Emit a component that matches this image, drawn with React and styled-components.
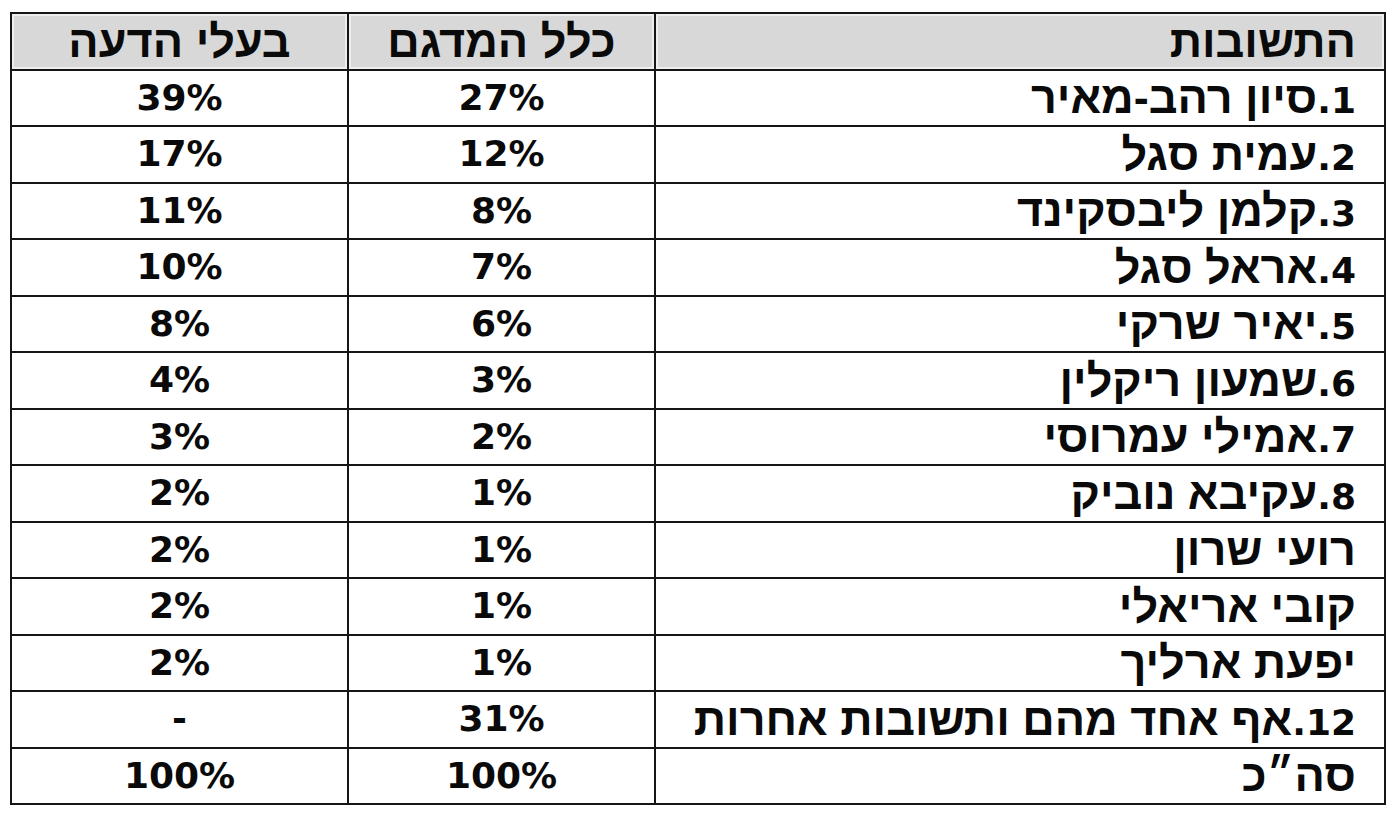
import React from "react";
import styled, { createGlobalStyle } from "styled-components";

const Global = createGlobalStyle`
  html, body { margin: 0; padding: 0; background: #ffffff; }
  body { font-family: "Liberation Sans", "DejaVu Sans", sans-serif; }
`;

const Page = styled.div`
  width: 1400px;
  height: 821px;
  box-sizing: border-box;
  padding: 12px 16px 0 10px;
  background: #fff;
`;

const Table = styled.table`
  direction: rtl;
  width: 1374px;
  border-collapse: collapse;
  table-layout: fixed;
  font-weight: 700;
  color: #0a0a0a;
`;

const Row = styled.tr`
  height: 56.5px;
`;

const Cell = styled.td`
  border: 2px solid #151515;
  padding: 0 ${(p) => (p.$answer ? "28px" : "0")} 0 0;
  text-align: ${(p) => (p.$answer ? "right" : "center")};
  vertical-align: middle;
  line-height: 1;
  white-space: nowrap;
  background: ${(p) => (p.$head ? "#d8d8d8" : "#ffffff")};
  box-shadow: ${(p) => (p.$head ? "inset 0 0 0 2px #eeeeee" : "none")};
`;

const Heb = styled.span`
  font-family: "Liberation Sans", "DejaVu Sans", sans-serif;
  font-size: 45px;
  font-weight: 700;
`;

const Num = styled.span`
  font-family: "DejaVu Sans", "Liberation Sans", sans-serif;
  font-size: 36px;
  font-weight: 700;
`;

const rows = [
  ["1.", "סיון רהב-מאיר", "27%", "39%"],
  ["2.", "עמית סגל", "12%", "17%"],
  ["3.", "קלמן ליבסקינד", "8%", "11%"],
  ["4.", "אראל סגל", "7%", "10%"],
  ["5.", "יאיר שרקי", "6%", "8%"],
  ["6.", "שמעון ריקלין", "3%", "4%"],
  ["7.", "אמילי עמרוסי", "2%", "3%"],
  ["8.", "עקיבא נוביק", "1%", "2%"],
  ["", "רועי שרון", "1%", "2%"],
  ["", "קובי אריאלי", "1%", "2%"],
  ["", "יפעת ארליך", "1%", "2%"],
  ["12.", "אף אחד מהם ותשובות אחרות", "31%", "-"],
  ["", "סה״כ", "100%", "100%"],
];

export default function App() {
  return (
    <>
      <Global />
      <Page>
        <Table>
          <colgroup>
            <col style={{ width: "730px" }} />
            <col style={{ width: "307px" }} />
            <col style={{ width: "337px" }} />
          </colgroup>
          <tbody>
            <Row>
              <Cell $head $answer><Heb>התשובות</Heb></Cell>
              <Cell $head><Heb>כלל המדגם</Heb></Cell>
              <Cell $head><Heb>בעלי הדעה</Heb></Cell>
            </Row>
            {rows.map((r, i) => (
              <Row key={i}>
                <Cell $answer>
                  {r[0] && <Num>{r[0]}</Num>}
                  <Heb>{r[1]}</Heb>
                </Cell>
                <Cell><Num>{r[2]}</Num></Cell>
                <Cell><Num>{r[3]}</Num></Cell>
              </Row>
            ))}
          </tbody>
        </Table>
      </Page>
    </>
  );
}
